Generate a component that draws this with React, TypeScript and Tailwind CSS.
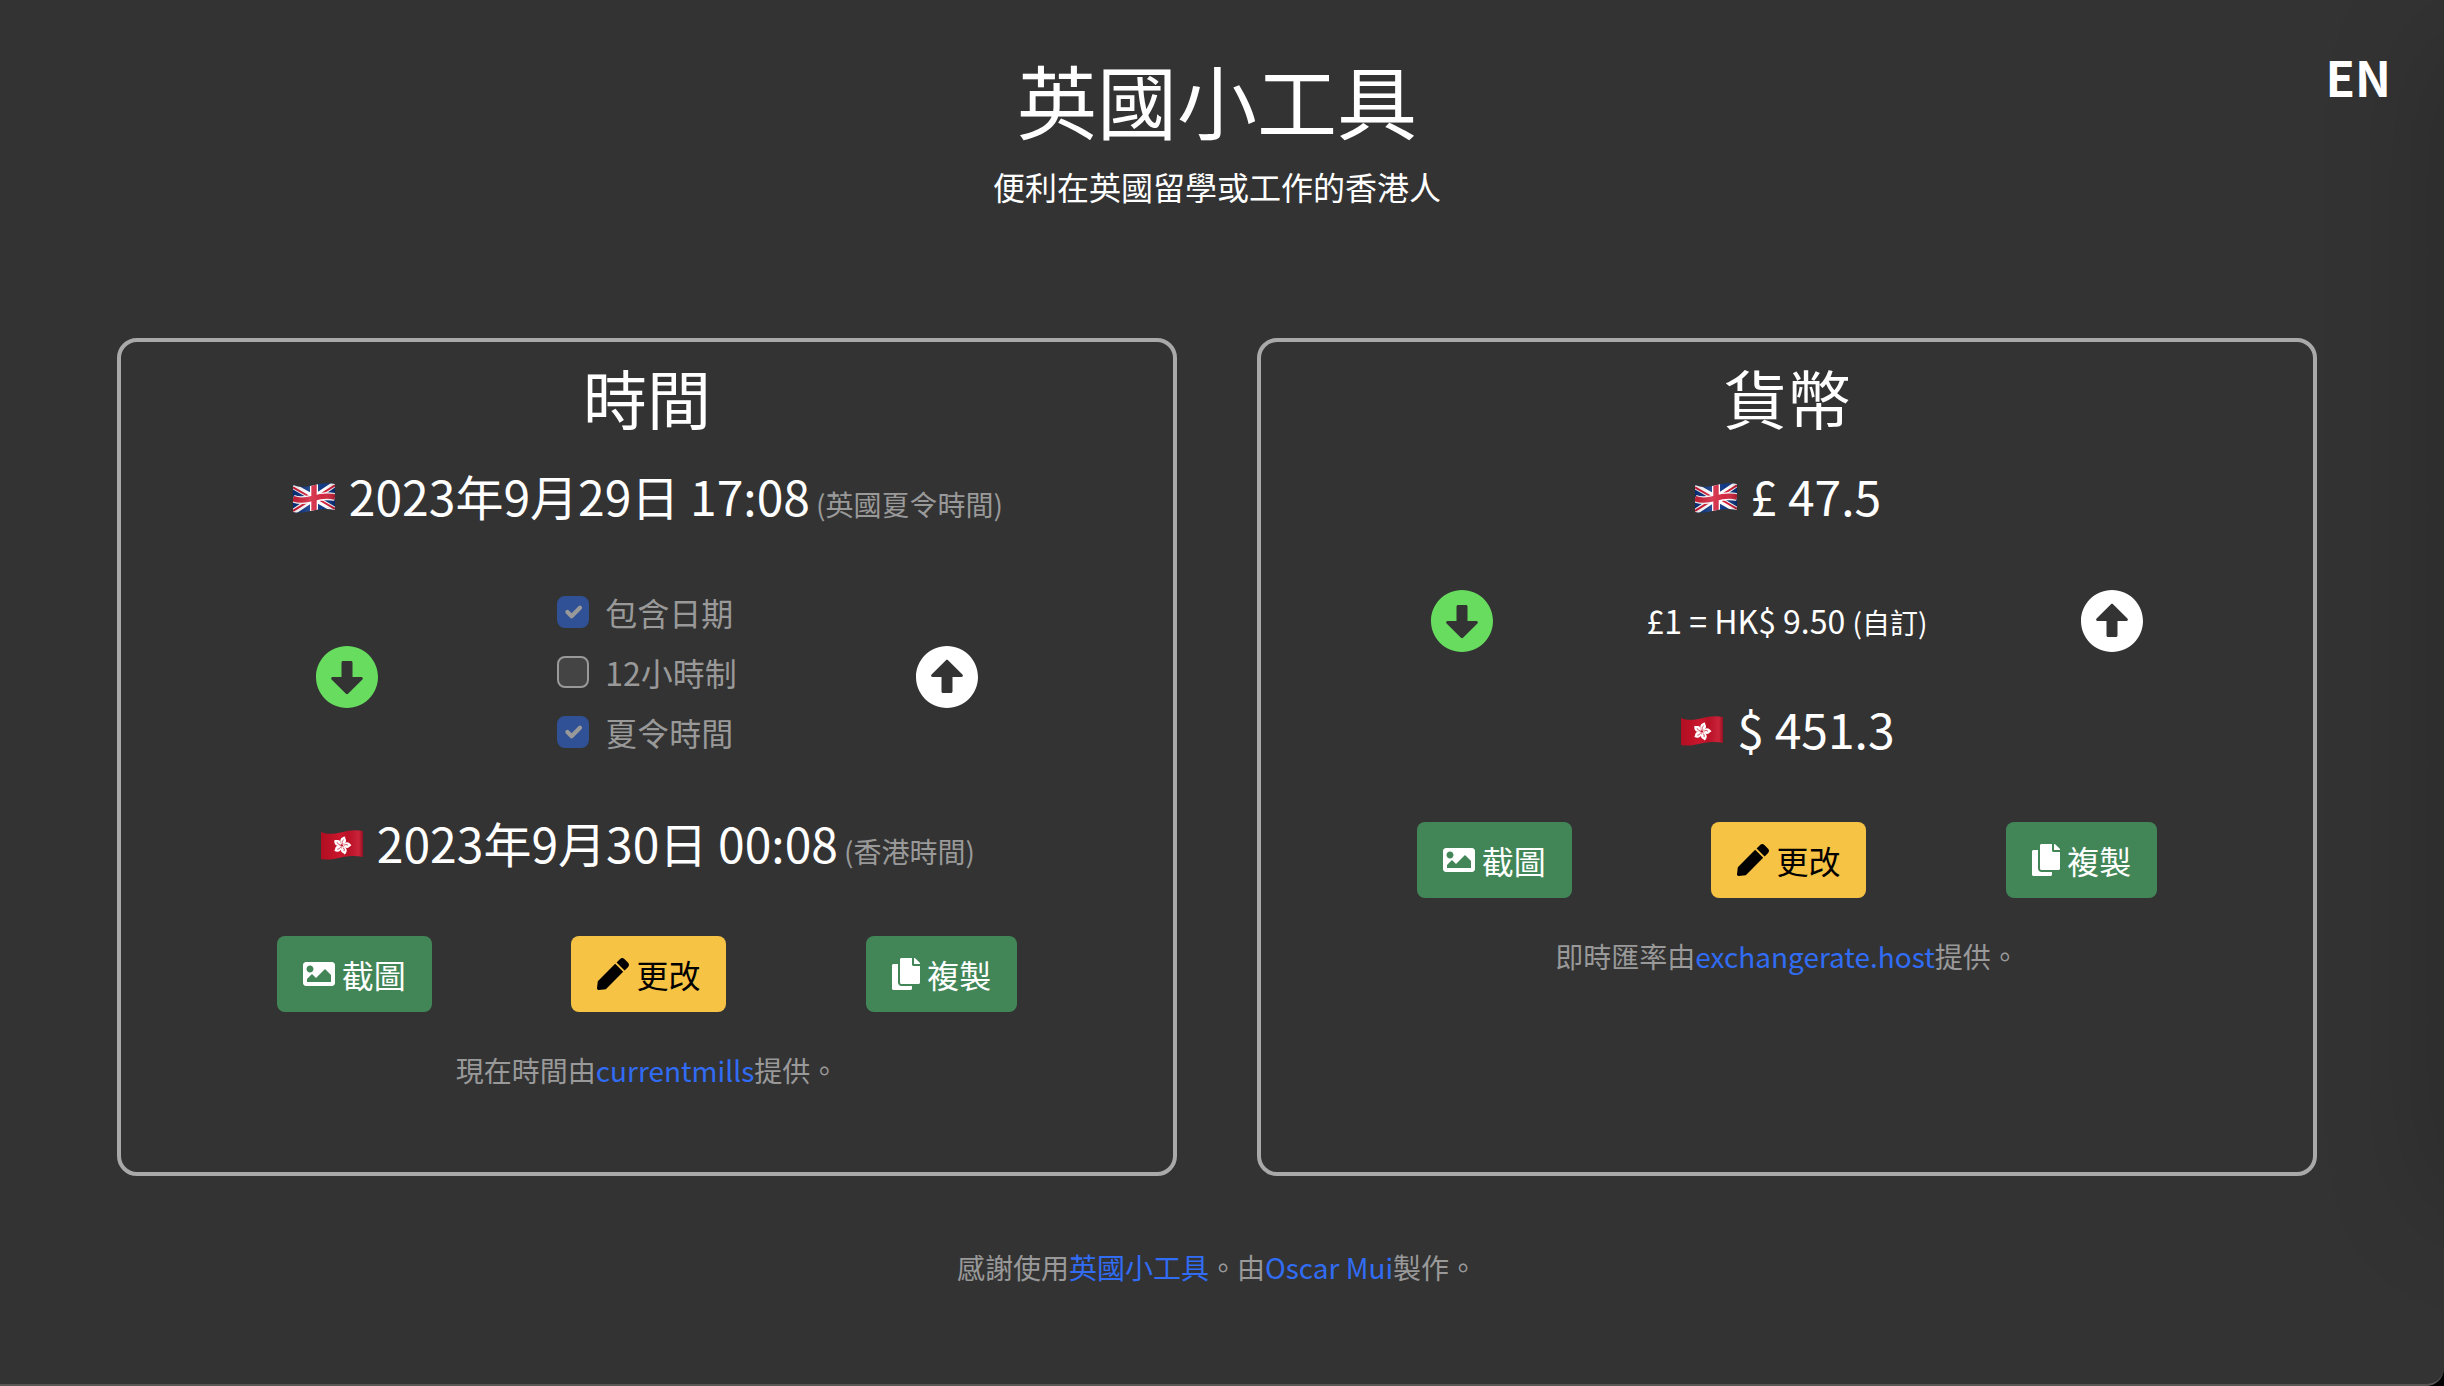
import { useState } from "react";
import type { ReactNode } from "react";
import {
  FaArrowAltCircleDown,
  FaArrowAltCircleUp,
  FaCopy,
  FaImage,
  FaPen,
} from "react-icons/fa";

const WAVE =
  "M0 2 C6 4.6 12 4.2 20 2.4 C28 0.4 35 -0.4 42 1 V27 C35 25.6 28 25.8 20 27.6 C12 29.6 6 30.2 0 29 Z";

const UK_BAR = "M0 15.6 C6 18 12 17.6 20 15.4 C28 13 35 12.4 42 14";

function UkFlag() {
  return (
    <svg viewBox="0 0 42 30" className="mr-[3px] mb-[3px] ml-0.5 inline-block h-[30px] w-[42px] align-baseline" role="img" aria-label="英國">
      <defs>
        <clipPath id="uk-wave">
          <path d={WAVE} />
        </clipPath>
        <linearGradient id="uk-shade" x1="0" x2="1">
          <stop offset="0" stopColor="#000" stopOpacity="0.1" />
          <stop offset="0.4" stopColor="#fff" stopOpacity="0.14" />
          <stop offset="0.7" stopColor="#fff" stopOpacity="0.04" />
          <stop offset="1" stopColor="#000" stopOpacity="0.2" />
        </linearGradient>
      </defs>
      <g clipPath="url(#uk-wave)">
        <rect width="42" height="30" fill="#07307f" />
        <path d="M0 3 L42 27 M0 29 L42 1" stroke="#fff" strokeWidth="6" />
        <path d="M0 4.4 L17 14 M42 25.8 L25 16 M0 28 L17 17.4 M42 2.4 L25 13" stroke="#cf1631" strokeWidth="2" />
        <path d="M21 0 V30" stroke="#fff" strokeWidth="8" />
        <path d={UK_BAR} stroke="#fff" strokeWidth="8" fill="none" />
        <path d="M21 0 V30" stroke="#d0203a" strokeWidth="5.4" />
        <path d={UK_BAR} stroke="#d0203a" strokeWidth="5.4" fill="none" />
        <rect width="42" height="30" fill="url(#uk-shade)" />
      </g>
    </svg>
  );
}

function HkFlag() {
  return (
    <svg viewBox="0 0 42 30" className="mr-[3px] mb-[3px] ml-0.5 inline-block h-[30px] w-[42px] align-baseline" role="img" aria-label="香港">
      <defs>
        <linearGradient id="hk-shade" x1="0" x2="1">
          <stop offset="0" stopColor="#b00f22" />
          <stop offset="0.15" stopColor="#b81024" />
          <stop offset="0.45" stopColor="#cb172e" />
          <stop offset="0.65" stopColor="#b91126" />
          <stop offset="0.9" stopColor="#c9233a" />
          <stop offset="1" stopColor="#96101f" />
        </linearGradient>
      </defs>
      <path d={WAVE} fill="url(#hk-shade)" />
      <g transform="translate(21 15.5) rotate(14)">
        {[0, 72, 144, 216, 288].map((angle) => (
          <g key={angle} transform={`rotate(${angle})`}>
            <path d="M0 -0.8 C-4.2 -3 -3.6 -8 1 -9.4 C0.4 -8 3.6 -6.6 2.8 -4.2 C2.3 -2.6 0.8 -2 0 -0.8 Z" fill="#fff" />
            <path d="M0 -1.8 C-1 -3.4 -0.8 -4.8 0.2 -6" stroke="#c4152b" strokeWidth="0.7" fill="none" />
          </g>
        ))}
      </g>
    </svg>
  );
}

function Card({ title, children }: { title: string; children: ReactNode }) {
  return (
    <section className="flex min-h-[838px] flex-1 flex-col items-center rounded-[20px] border-4 border-[#a9a9a9] pt-4">
      <h2 className="mb-[25px] text-[64px] leading-[76px]">{title}</h2>
      {children}
    </section>
  );
}

function Reading({ flag, value, zone }: { flag: ReactNode; value: string; zone?: string }) {
  return (
    <p className="text-5xl leading-[72px] whitespace-nowrap">
      {flag} {value}
      {zone && <span className="ml-1.5 text-[28px] text-[#999999]">{zone}</span>}
    </p>
  );
}

function ArrowButton({ up = false }: { up?: boolean }) {
  return up ? (
    <button type="button" aria-label="向上轉換" className="text-white">
      <FaArrowAltCircleUp className="size-16" />
    </button>
  ) : (
    <button type="button" aria-label="向下轉換" className="text-[#67dc5f]">
      <FaArrowAltCircleDown className="size-16" />
    </button>
  );
}

function Option({ label, initial = false }: { label: string; initial?: boolean }) {
  const [checked, setChecked] = useState(initial);
  return (
    <label className="flex h-[60px] items-center gap-4 text-[32px] leading-[48px] text-[#999999]">
      <span className="grid size-8 place-items-center">
        <input
          type="checkbox"
          checked={checked}
          onChange={(e) => setChecked(e.target.checked)}
          className="peer col-start-1 row-start-1 size-8 appearance-none rounded-lg border-2 border-[#999999] bg-[#444444] checked:border-[#305196] checked:bg-[#305196]"
        />
        <svg viewBox="0 0 20 20" className="pointer-events-none invisible col-start-1 row-start-1 size-7 peer-checked:visible" fill="none" aria-hidden="true">
          <path d="M6 10l3 3l6-6" stroke="#999999" strokeWidth="3" strokeLinecap="round" strokeLinejoin="round" />
        </svg>
      </span>
      {label}
    </label>
  );
}

function Actions() {
  return (
    <div className="flex w-[880px] max-w-full justify-around text-[32px] leading-[48px]">
      <button type="button" className="flex h-[76px] items-center gap-[7px] rounded-lg bg-[#428658] px-[26px] text-white">
        <FaImage className="size-8" />
        截圖
      </button>
      <button type="button" className="flex h-[76px] items-center gap-[7px] rounded-lg bg-[#f6c344] px-[26px] text-black">
        <FaPen className="size-8" />
        更改
      </button>
      <button type="button" className="flex h-[76px] items-center gap-[7px] rounded-lg bg-[#428658] px-[26px] text-white">
        <FaCopy className="h-8 w-7" />
        複製
      </button>
    </div>
  );
}

function Credit({ before, link, after }: { before: string; link: string; after: string }) {
  return (
    <p className="mt-[37px] text-[28px] leading-[42px] text-[#999999]">
      {before}
      <a href="#" className="text-[#316cf4]">{link}</a>
      {after}
    </p>
  );
}

export default function App() {
  return (
    <div className="bg-black">
      <div
        lang="zh-Hant"
        className="relative min-h-screen overflow-hidden rounded-br-[18px] border-b-2 border-[#5a5656] bg-[#333333] pr-[10px] font-['Noto_Sans_CJK_TC','Noto_Sans',sans-serif] text-white"
      >
        <div className="pointer-events-none absolute top-10 -right-20 bottom-[180px] w-20 shadow-[0_0_120px_rgba(0,0,0,0.24)]" />
        <button type="button" className="absolute top-10 right-[53px] text-5xl leading-[72px] font-bold">
          EN
        </button>
        <header className="pt-[50px] text-center">
          <h1 className="text-[80px] leading-[96px]">英國小工具</h1>
          <p className="mt-4 text-[32px] leading-[48px]">便利在英國留學或工作的香港人</p>
        </header>

        <main className="mt-32 flex gap-20 px-[117px]">
          <Card title="時間">
            <Reading flag={<UkFlag />} value="2023年9月29日 17:08" zone="(英國夏令時間)" />
            <div className="mt-[42px] mb-[34px] flex w-[664px] max-w-full items-center justify-between">
              <ArrowButton />
              <div className="pb-2.5">
                <Option label="包含日期" initial />
                <Option label="12小時制" />
                <Option label="夏令時間" initial />
              </div>
              <ArrowButton up />
            </div>
            <Reading flag={<HkFlag />} value="2023年9月30日 00:08" zone="(香港時間)" />
            <div className="mt-[49px] flex max-w-full justify-center">
              <Actions />
            </div>
            <Credit before="現在時間由" link="currentmills" after="提供。" />
          </Card>

          <Card title="貨幣">
            <Reading flag={<UkFlag />} value="£ 47.5" />
            <div className="mt-[58px] mb-[39px] flex w-[714px] max-w-full items-center justify-between">
              <ArrowButton />
              <p className="text-[32px] leading-[48px]">
                £1 = HK$ 9.50 <span className="text-[28px]">(自訂)</span>
              </p>
              <ArrowButton up />
            </div>
            <Reading flag={<HkFlag />} value="$ 451.3" />
            <div className="mt-[58px] flex max-w-full justify-center">
              <Actions />
            </div>
            <Credit before="即時匯率由" link="exchangerate.host" after="提供。" />
          </Card>
        </main>

        <footer className="py-[70px] text-center text-[28px] leading-[42px] text-[#999999]">
          感謝使用
          <a href="#" className="text-[#316cf4]">英國小工具</a>
          。由
          <a href="#" className="text-[#316cf4]">Oscar Mui</a>
          製作。
        </footer>
      </div>
    </div>
  );
}
